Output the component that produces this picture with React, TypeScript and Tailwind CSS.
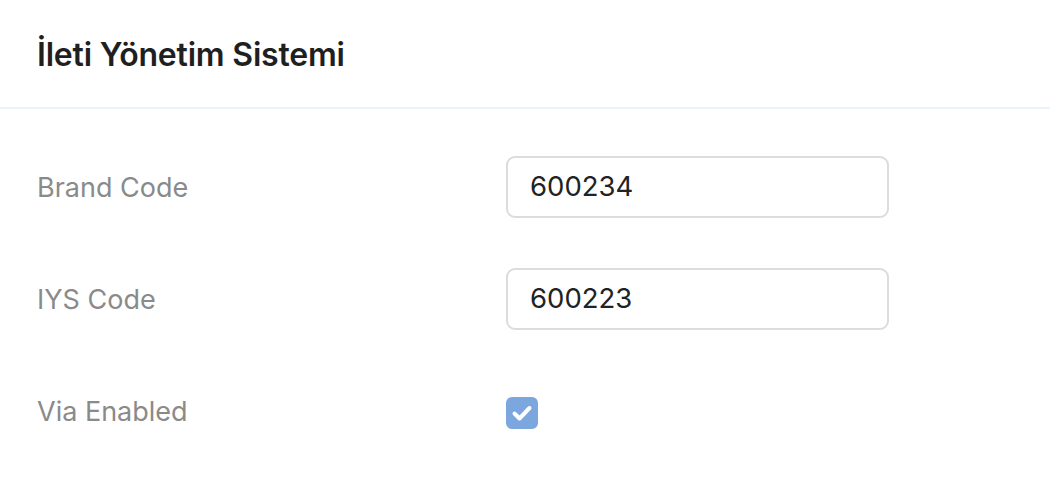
import React from 'react';

const rows = [
  { label: 'Brand Code', value: '600234' },
  { label: 'IYS Code', value: '600223' },
];

export default function App() {
  return (
    <div className="min-h-screen w-full bg-white font-['Inter',sans-serif]">
      {/* Header */}
      <div className="h-[109px] flex items-center px-[37px] pt-[2px] border-b-2 border-[#ebf2fb]">
        <h1 className="text-[32px] font-semibold text-[#1f1f1f] tracking-[-0.2px]">İleti Yönetim Sistemi</h1>
      </div>

      {/* Form */}
      <div className="px-[37px] pt-[47px] flex flex-col gap-[50px]">
        {rows.map((r) => (
          <div key={r.label} className="flex items-center h-[62px]">
            <label className="w-[469px] pt-[3px] text-[27px] text-[#8a8a8a]">{r.label}</label>
            <div className="w-[383px] h-[62px] rounded-[9px] border-2 border-[#dcdcdc] flex items-center px-[22px] text-[27.5px] text-[#222]">
              {r.value}
            </div>
          </div>
        ))}
        <div className="flex items-center h-[62px] pt-[3px]">
          <label className="w-[469px] text-[27px] text-[#8a8a8a]">Via Enabled</label>
          <div className="w-[32px] h-[32px] rounded-[6px] bg-[#7ba7de] flex items-center justify-center">
            <svg width="32" height="32" viewBox="0 0 32 32" fill="none">
              <path d="M8.5 16.5 L13.5 21.5 L23.5 11" stroke="white" strokeWidth="4" strokeLinecap="round" strokeLinejoin="round" />
            </svg>
          </div>
        </div>
      </div>
    </div>
  );
}
